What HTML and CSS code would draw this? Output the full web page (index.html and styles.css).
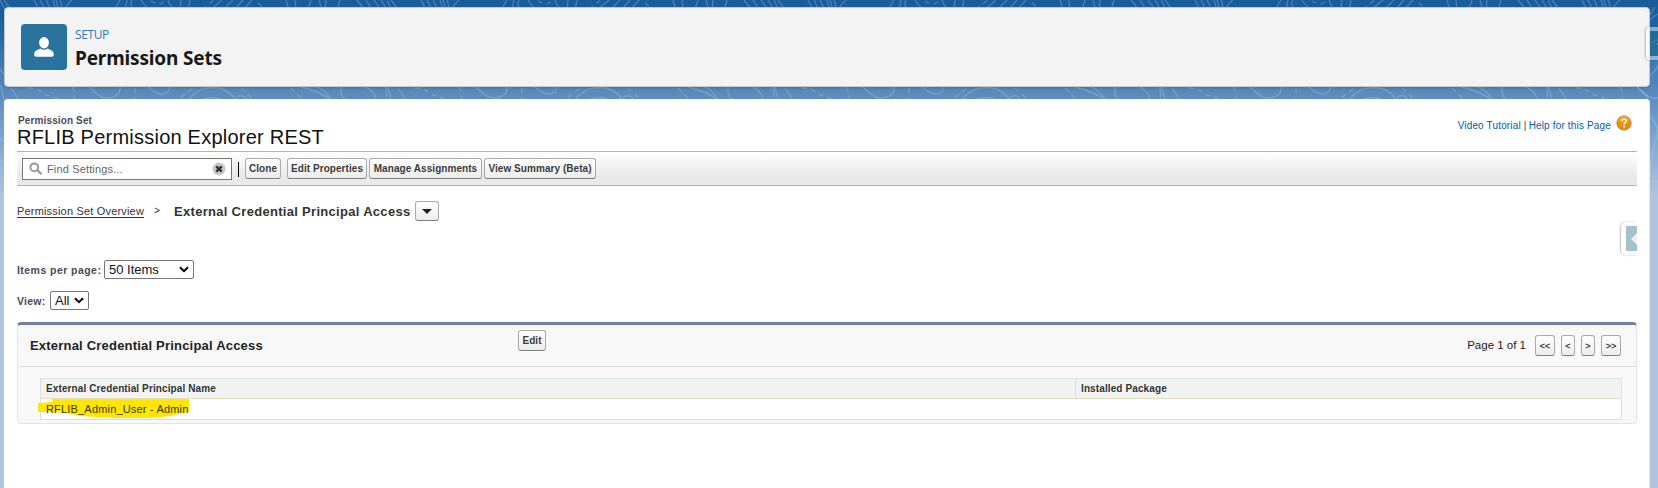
FILE: index.html
```
<!DOCTYPE html>
<html lang="en">
<head>
<meta charset="utf-8">
<title>Permission Sets</title>
<link rel="stylesheet" href="styles.css">
</head>
<body>
<svg class="backdrop" width="1658" height="200" aria-hidden="true">
  <defs>
    <pattern id="contours" width="387" height="200" patternUnits="userSpaceOnUse">
      <g fill="none" stroke="#bcd7f0" stroke-opacity=".29" stroke-width="1.3">
        <path d="M0 0l5 10M4 0l9 12M34 0l5 10M40 0l5 10M46 0l5 10M53 0l3 10M56 0l3 10M60 0l3 10M72 0q-6 5-7 10M120 0q-3 5-6 10M127 0l-2 10M132 0q-3 5 2 10M141 0q5 9 13 10M168 0q2 7 8 10M181 0l-1 10M190 0l-2 10M222 0l-12 10M233 0l-10 10M243 0l-9 10M252 0l-9 10M286 0l3 10M295 0l1 10M311 0q-2 5-3 10M319 0l3 10M326 0l-1 10M340 0l-3 10M357 0l8 10M366 0l6 10M374 0l7 10M381 0l6 10"/>
        <path stroke-dasharray="5 4" d="M151 1q9 6 15-1M202 9l12-9M258 3l8 7M28 88q12 1 18 7 12 3 15 6M72 87q5 8 1 13M135 88v12M181 97l15-11M241 88l11 10M291 88l12 12"/>
        <path d="M89 87q12 12 18 11 14-1 13-11M148 87q9 7 13 7 8 0 9-7M188 100q10-13 23-12 15-2 25 12M236 98q4-5 10 0v3M200 100q15-5 21 0M301 87q20 5 30 13M318 87q8 4 13 12M341 87q-1 9 4 12M366 87q10 6 10 13M0 85q4 12 6 25M11 88l8 12M386 87l1 13M0 52q-6 14 5 23M0 110q-12 18 3 32M0 160q8 4 10 15"/>
      </g>
    </pattern>
  </defs>
  <rect width="1658" height="200" fill="url(#contours)"/>
  <path class="edge-line" d="M1649 22q3-6 12-9M1650 43l10-4M1658 60q2 7-8 16M1650 15l5-8M1637 87q10 8 11 12M1650 116q12 14 5 26-5 18-5 34M1650 182q5-2 9 0"/>
</svg>
<div class="page">
  <header class="page-header">
    <div class="header-icon">
      <svg width="46" height="46" viewBox="0 0 46 46"><ellipse cx="23" cy="18.8" rx="4.9" ry="5.7" fill="#fff"/><path d="M13.2 30.5c0-3 1.8-4.2 6.3-6 2 1.6 5 1.6 7 0 4.500 1.800 6.300 3 6.300 6 0 1.500-.7 2.200-2 2.200H15.200c-1.300 0-2-.7-2-2.200z" fill="#fff"/></svg>
    </div>
    <div class="header-text">
      <span class="header-kicker">SETUP</span>
      <h1 class="header-title">Permission Sets</h1>
    </div>
    <div class="edge-tab"><span class="edge-tab-inner"><i class="edge-arrow"></i></span></div>
  </header>

  <main class="content">
    <div class="title-row">
      <div>
        <div class="entity">Permission Set</div>
        <h2 class="entity-name">RFLIB Permission Explorer REST</h2>
      </div>
      <div class="help"><a>Video Tutorial</a><span class="bar">|</span><a>Help for this Page</a>
        <svg width="16" height="16" viewBox="0 0 16 16"><defs><linearGradient id="amber" x2="0" y2="1"><stop stop-color="#f6b648"/><stop offset=".5" stop-color="#ee9207"/><stop offset="1" stop-color="#e38a06"/></linearGradient></defs><circle cx="8" cy="8" r="7.100" fill="url(#amber)" stroke="#b17a25" stroke-width=".9"/><path d="M5.900 6.200c.1-2.700 4.400-2.600 4.300-.1 0 1.500-2 1.500-2.100 3.400" fill="none" stroke="#fff" stroke-width="1.600"/><circle cx="8.100" cy="11.600" r="1" fill="#fff"/></svg>
      </div>
    </div>

    <div class="toolbar">
      <div class="search">
        <svg width="14" height="14" viewBox="0 0 14 14" fill="none" stroke="#999"><circle cx="5.300" cy="5.300" r="3.900" stroke-width="2"/><path d="M8.200 8.200l4.300 4" stroke-width="2.300"/></svg>
        <span class="search-text">Find Settings...</span>
        <svg width="14" height="14" viewBox="0 0 14 14"><circle cx="7" cy="7" r="6.500" fill="#c4cacb"/><path d="M4.300 4.300l5.400 5.400M9.700 4.300l-5.400 5.400" stroke="#333" stroke-width="2.400"/></svg>
      </div>
      <span class="divider"></span>
      <button class="btn clone">Clone</button>
      <button class="btn edit-props">Edit Properties</button>
      <button class="btn assign">Manage Assignments</button>
      <button class="btn summary">View Summary (Beta)</button>
    </div>

    <nav class="crumbs">
      <a class="crumb-link">Permission Set Overview</a>
      <span class="crumb-sep">&gt;</span>
      <strong class="crumb-current">External Credential Principal Access</strong>
      <button class="btn drop"><i class="caret"></i></button>
    </nav>
    <div class="side-tab-row"><div class="side-tab"><span class="side-tab-inner"><i class="edge-arrow"></i></span></div></div>

    <div class="field"><span class="field-label items-label">Items per page:</span>
      <span class="select items-select">50 Items<svg width="10" height="7" viewBox="0 0 10 7"><path d="M1 1.200l4 4 4-4" fill="none" stroke="#000" stroke-width="2"/></svg></span></div>
    <div class="field view-field"><span class="field-label view-label">View:</span>
      <span class="select view-select">All<svg width="10" height="7" viewBox="0 0 10 7"><path d="M1 1.200l4 4 4-4" fill="none" stroke="#000" stroke-width="2"/></svg></span></div>

    <section class="block">
      <div class="block-head">
        <h3 class="block-title">External Credential Principal Access</h3>
        <button class="btn edit">Edit</button>
        <div class="pager"><span class="pager-text">Page 1 of 1</span>
          <button class="btn wide">&lt;&lt;</button><button class="btn narrow">&lt;</button><button class="btn narrow">&gt;</button><button class="btn wide">&gt;&gt;</button></div>
      </div>
      <div class="table">
        <div class="row head"><span class="cell name-head">External Credential Principal Name</span><span class="cell package-head">Installed Package</span></div>
        <div class="row data"><svg class="marker" width="153" height="21"><path d="M0 4l15-1-1-3h137v13q-12 2-18 4-14 2-27 2H77q-20-1-35-2-12-3-26-4L0 13z" fill="#ffe600"/></svg><span class="cell user">RFLIB_Admin_User - Admin</span></div>
      </div>
    </section>
  </main>
</div>
</body>
</html>
```
FILE: styles.css
```
* { box-sizing: border-box; }
body {
  margin: 0;
  height: 488px;
  overflow: hidden;
  font-family: "Liberation Sans", Arial, sans-serif;
  background: linear-gradient(#195c9c 0, #1c61a1 22px, #5f8fc1 100px, #b0c4df 195px, #b0c4df 100%);
}
h1, h2, h3 { margin: 0; font-weight: normal; }
.backdrop { position: absolute; left: 0; top: 0; }
.edge-line { fill: none; stroke: #bcd7f0; stroke-opacity: .33; stroke-width: 1.3; }
.page { position: relative; width: 1658px; height: 488px; padding: 7px 8px 0 4px; display: flex; flex-direction: column; gap: 12px; }

.page-header {
  position: relative;
  height: 80px;
  flex: none;
  display: flex;
  gap: 8px;
  padding: 16px 0 0 16px;
  background: #f3f3f3;
  border: 1px solid #c9c7c5;
  border-radius: 4px;
  box-shadow: 0 2px 2px rgba(0, 0, 0, .1);
}
.header-icon { width: 46px; height: 46px; background: #2a739e; border-radius: 4px; }
.header-icon svg { display: block; }
.header-text { font-family: "Open Sans", "Noto Sans", sans-serif; padding-top: 1px; }
.header-kicker { display: block; font-size: 12px; line-height: 20px; color: #2a7ab0; letter-spacing: -.4px; }
.header-title { font-size: 19px; line-height: 26px; font-weight: 700; color: #181818; letter-spacing: -.16px; font-family: "Noto Sans", sans-serif; }
.edge-tab {
  position: absolute;
  left: 1641px;
  top: 19px;
  width: 15px;
  height: 33px;
  border: 4px solid rgba(255, 255, 255, .45);
  border-right: 0;
  border-radius: 4px 0 0 4px;
  box-shadow: -1px 0 2px rgba(0, 60, 80, .3);
}
.edge-tab-inner { display: flex; align-items: center; justify-content: flex-end; height: 25px; background: rgba(30, 110, 140, .6); }
.edge-arrow { border: 6px solid transparent; border-left: 0; border-right-color: #f3f6f7; opacity: .9; }
.edge-tab .edge-arrow { border-width: 4px; border-left: 0; opacity: .7; }

.content { flex: 1; background: #fff; border-radius: 4px 4px 0 0; padding: 15px 12px 0 13px; border-right: 1px solid #e6e9ee; }
.title-row { display: flex; justify-content: space-between; height: 37px; }
.entity { font-size: 10px; line-height: 13px; font-weight: 700; color: #4a4a56; padding-left: 1px; letter-spacing: .13px; }
.entity-name { font-size: 20px; line-height: 20px; color: #111; letter-spacing: .23px; }
.help { display: flex; align-items: flex-start; font-size: 10px; line-height: 24px; color: #015ba7; padding-right: 5px; white-space: nowrap; letter-spacing: .16px; }
.help svg { margin: 1px 0 0 5px; }
.bar { color: #333; margin: 0 2px 0 3px; }

.toolbar { height: 35px; border: solid #b5b5b5; border-width: 1px 0; background: linear-gradient(#fff, #e9e9e9 70%); display: flex; align-items: flex-start; padding: 6px 0 0 5px; }
.search { width: 210px; height: 22px; border: 1px solid #777; background: #fff; display: flex; align-items: center; padding: 0 5px 0 6px; }
.search-text { flex: 1; margin-left: 4px; font-size: 11px; color: #666; letter-spacing: .15px; }
.divider { width: 1px; height: 15px; background: #000; margin: 4px 6px 0 6px; }
.btn {
  height: 21px;
  padding: 0;
  border: 1px solid #aaa;
  border-bottom-color: #7f7f7f;
  border-radius: 3px;
  background: linear-gradient(#fff, #ececec);
  font: 700 10px/18px "Liberation Sans", Arial, sans-serif;
  color: #3b3b3b;
  white-space: nowrap;
  letter-spacing: .06px;
  flex: none;
}
.clone { width: 36px; margin-right: 6px; }
.edit-props { width: 80px; margin-right: 2px; }
.assign { width: 113px; margin-right: 2px; }
.summary { width: 112px; }

.crumbs { display: flex; height: 20px; line-height: 20px; margin-top: 15px; }
.crumb-link { width: 127px; height: 16px; margin-top: 3px; font-size: 11px; line-height: 15px; color: #333; text-decoration: underline; text-underline-offset: 2px; white-space: nowrap; letter-spacing: .18px; }
.crumb-sep { width: 30px; padding-left: 10px; font-size: 10px; color: #333; }
.crumb-current { width: 241px; font-size: 13px; line-height: 21px; color: #333; white-space: nowrap; letter-spacing: .3px; }
.drop { width: 24px; height: 20px; display: flex; align-items: center; justify-content: center; }
.caret { border: 5px solid transparent; border-bottom: 0; border-top-color: #222; }

.side-tab-row { display: flex; justify-content: flex-end; height: 39px; padding-top: 1px; }
.side-tab { width: 16px; height: 33px; padding: 4px 0 4px 5px; border-radius: 5px 0 0 5px; box-shadow: -1px 0 2px rgba(0, 0, 0, .25); background: #fff; }
.side-tab-inner { height: 25px; background: #a5c1cc; display: flex; align-items: center; justify-content: flex-end; }

.field { display: flex; height: 19px; gap: 3px; }
.field-label { font-size: 10.500px; line-height: 20px; font-weight: 700; color: #4a4a56; white-space: nowrap; }
.items-label { width: 84px; letter-spacing: .45px; }
.view-label { width: 30px; letter-spacing: .25px; }
.view-field { margin-top: 12px; }
.select { border: 1px solid #767676; border-radius: 2px; font-size: 13px; line-height: 17px; color: #111; display: flex; justify-content: space-between; align-items: center; padding: 0 4px; background: #fff; }
.items-select { width: 90px; }
.view-select { width: 39px; }

.block { margin-top: 12px; height: 102px; border: 1px solid #e3e4e6; border-top: 3px solid #747e98; border-radius: 4px; background: #f8f8f8; }
.block-head { display: flex; height: 42px; border-bottom: 1px solid #dbdbdb; padding-left: 12px; }
.block-title { width: 488px; font-size: 13px; line-height: 41px; color: #222; font-weight: 700; letter-spacing: .2px; }
.edit { width: 28px; margin-top: 5px; }
.pager { margin-left: auto; display: flex; gap: 6px; padding: 10px 15px 0 0; }
.pager-text { font-size: 11.500px; line-height: 21px; color: #222; margin-right: 3px; white-space: nowrap; }
.wide { width: 20px; }
.narrow { width: 14px; }
.pager .btn { font-size: 9px; letter-spacing: 0; }
.table { margin: 11px 14px 0 22px; border: 1px solid #dde1e5; border-bottom-color: #e3deb8; background: #fff; height: 42px; }
.row { display: flex; position: relative; }
.head { height: 20px; background: #f1f3f3; border-bottom: 1px solid #e3deb8; }
.cell { font-size: 10px; line-height: 20px; color: #333; padding-left: 5px; white-space: nowrap; letter-spacing: .11px; }
.name-head { width: 1035px; font-weight: 700; border-right: 1px solid #dde1e5; }
.package-head { font-weight: 700; }
.data { height: 20px; }
.user { position: relative; font-size: 11px; color: #36361c; letter-spacing: .18px; }
.marker { position: absolute; left: -3px; top: 0; }
```
